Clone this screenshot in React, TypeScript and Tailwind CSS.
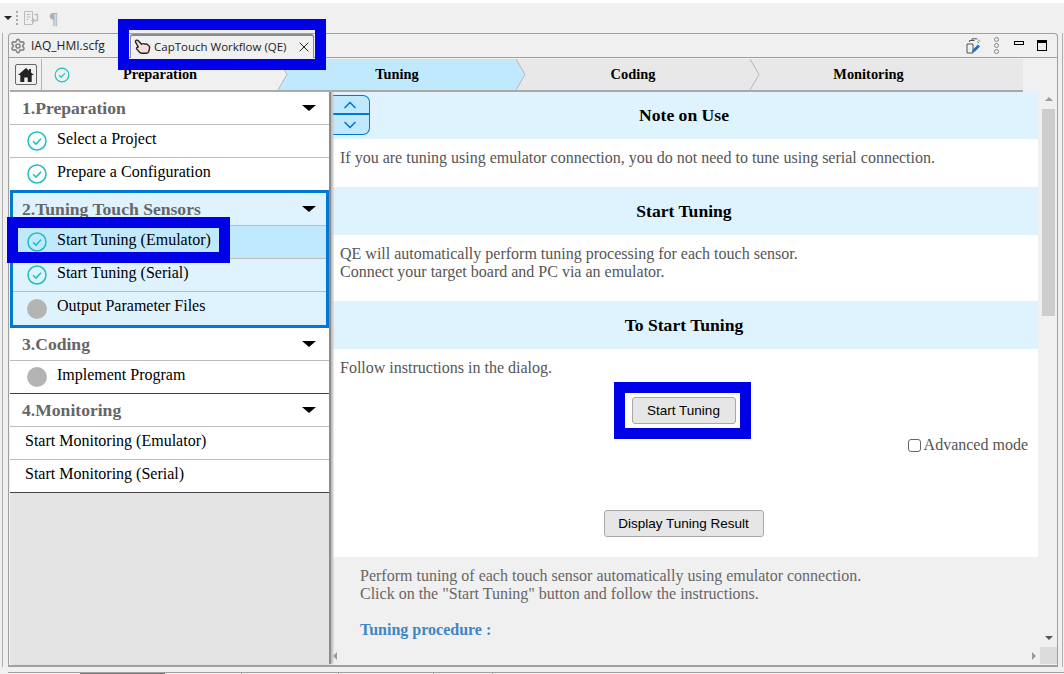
import { ChevronDown, ChevronUp, Settings, X } from "lucide-react";

const serif = "font-['Liberation_Serif',serif]";

const CheckIcon = () => (
  <svg width="20" height="20" viewBox="0 0 20 20" fill="none" className="shrink-0">
    <circle cx="10" cy="10" r="9" stroke="#1fbfc0" strokeWidth="1.5" />
    <path d="M6 10.300l3 2.800 5-5.400" stroke="#1fbfc0" strokeWidth="1.5" />
  </svg>
);

const GrayDot = () => <div className="w-5 h-5 rounded-full bg-[#b4b4b4] shrink-0" />;

const Caret = () => (
  <div className="w-0 h-0 border-x-[7px] border-x-transparent border-t-[6px] border-t-black" />
);

const HandIcon = () => (
  <svg width="17" height="16" viewBox="0 0 18 17" fill="none" className="shrink-0">
    <path
      d="M1.500 2.500C2 1 3.500 .8 4.500 1.800L8 5.500c1.500-.8 3-.6 4 0 1.200-.3 2.500.2 3.200 1.200 1 .4 1.600 1.500 1.300 3l-.8 3.500c-.3 1.300-1.200 2-2.500 2H8.500c-1.500 0-2.500-.6-3.200-1.800L2.800 10.500C2.300 9.500 3 8.500 4.500 8.500L2 4c-.4-.5-.6-1-.5-1.500z"
      fill="#f8dcd8"
      stroke="#222"
      strokeWidth="1.500"
      strokeLinejoin="round"
    />
  </svg>
);

const HomeIcon = () => (
  <svg width="16" height="14" viewBox="0 0 16 14" fill="#222">
    <path d="M8 0L0 7h2.300v7h4V9.500h3.400V14h4V7H16L13 4.400V1h-2v1.700z" />
  </svg>
);

const PreferIcon = () => (
  <svg width="15" height="16" viewBox="0 0 15 16" fill="none">
    <path d="M1 6h6v9H1zM3.500 4V2.500h5M6 2V.8h5" stroke="#555" strokeWidth="1" />
    <path d="M11 3.500l2 1.500M12 1.500l2 2" stroke="#777" strokeWidth="1" />
    <path d="M6 14.500l1-3 5-5 2 2-5 5z" fill="#1a6fc0" />
  </svg>
);

const ToolbarIcon = () => (
  <svg width="15" height="15" viewBox="0 0 15 15" fill="none" stroke="#bcbcbc" className="ml-[2px]">
    <path d="M.5 .5h8v13h-8zM2.500 3.500h4M2.500 6h4M2.500 8.500h2" />
    <path d="M10.500 3.500h3v6h-5M10 7.500l-2 2 2 2" strokeWidth="1.300" />
  </svg>
);

const SidebarHeader = ({ label }: { label: string }) => (
  <div className="h-[33px] flex items-center justify-between pl-3 pr-[13px] border-b border-[#bdbdbd]">
    <span className="text-[17.6px] font-bold text-[#666] leading-none pt-[2px]">{label}</span>
    <Caret />
  </div>
);

type RowProps = { label: string; state?: "done" | "todo"; active?: boolean; indent?: string; line?: string };

const SidebarRow = ({ label, state, active, indent = "pl-[17px]", line = "h-[33px] border-b border-[#bdbdbd]" }: RowProps) => (
  <div className={`flex items-center gap-[10px] ${indent} ${line} ${active ? "bg-[#c1e9fd]" : ""}`}>
    {state === "done" && <CheckIcon />}
    {state === "todo" && <GrayDot />}
    <span className="text-[16px] text-black leading-none pb-[5px]">{label}</span>
  </div>
);

const Sidebar = () => (
  <div className="w-[321px] shrink-0 flex flex-col bg-[#e4e4e4] border-r-[2px] border-[#8c8c8c] shadow-[2px_0_2px_#bbb] z-10">
    <div className="bg-white border-b border-[#444]">
      <SidebarHeader label="1.Preparation" />
      <SidebarRow label="Select a Project" state="done" />
      <SidebarRow label="Prepare a Configuration" state="done" line="h-[32px]" />
      <div className="border-[3px] border-[#0078d4] bg-[#dff3ff]">
        <div className="h-[33px] flex items-center justify-between pl-[9px] pr-[10px] border-b border-[#bdbdbd]">
          <span className="text-[17.6px] font-bold text-[#666] leading-none pt-[2px]">2.Tuning Touch Sensors</span>
          <Caret />
        </div>
        <SidebarRow label="Start Tuning (Emulator)" state="done" active indent="pl-[14px]" />
        <SidebarRow label="Start Tuning (Serial)" state="done" indent="pl-[14px]" />
        <SidebarRow label="Output Parameter Files" state="todo" indent="pl-[14px]" line="h-[33px]" />
      </div>
      <SidebarHeader label="3.Coding" />
      <SidebarRow label="Implement Program" state="todo" line="h-[33px] border-b border-[#444]" />
      <SidebarHeader label="4.Monitoring" />
      <SidebarRow label="Start Monitoring (Emulator)" indent="pl-[15px]" />
      <SidebarRow label="Start Monitoring (Serial)" indent="pl-[15px]" line="h-[32px]" />
    </div>
  </div>
);

const Section = ({ title, h = "h-12" }: { title: string; h?: string }) => (
  <div className={`${h} flex items-center justify-center bg-[#dff3ff] text-[17.6px] font-bold text-black pr-[3px]`}>
    {title}
  </div>
);

const Btn = ({ label, w }: { label: string; w: string }) => (
  <button
    className={`${w} h-[27px] rounded-[3px] border border-[#a8a8a8] bg-[#e6e6e6] text-[13.5px] text-black font-['Liberation_Sans',sans-serif]`}
  >
    {label}
  </button>
);

const Content = () => (
  <div className="flex-1 min-w-0 ml-[2px] flex flex-col overflow-hidden">
    <div className="bg-white text-[16px] leading-[18px] text-[#555] relative">
      <div className="absolute -left-[2px] top-[3px] w-[39px] h-10 flex flex-col rounded-r-[7px] border border-l-0 border-[#0078d4] bg-[#c1e9fd] text-[#0078d4]">
        <div className="h-[19px] flex items-center justify-center border-b-[2px] border-[#0078d4]">
          <ChevronUp size={20} strokeWidth={2} />
        </div>
        <div className="flex-1 flex items-center justify-center">
          <ChevronDown size={20} strokeWidth={2} />
        </div>
      </div>
      <Section title="Note on Use" h="h-[47px] pb-[2px]" />
      <p className="pl-[7px] pt-[10px] pb-[20px]">
        If you are tuning using emulator connection, you do not need to tune using serial connection.
      </p>
      <Section title="Start Tuning" />
      <p className="pl-[7px] pt-[10px] pb-[20px]">
        QE will automatically perform tuning processing for each touch sensor.
        <br />
        Connect your target board and PC via an emulator.
      </p>
      <Section title="To Start Tuning" />
      <p className="pl-[7px] pt-[10px]">Follow instructions in the dialog.</p>
      <div className="flex justify-center pt-[20px] pr-[4px]">
        <Btn label="Start Tuning" w="w-[104px]" />
      </div>
      <label className="flex items-center justify-end pr-[10px] pt-[12px]">
        <span className="w-[13px] h-[13px] rounded-[3px] border border-[#666] bg-white mr-[3px]" />
        Advanced mode
      </label>
      <div className="flex justify-center pt-[56px] pb-[20px] pr-[4px]">
        <Btn label="Display Tuning Result" w="w-[160px]" />
      </div>
    </div>
    <div className="pl-[27px] pt-[10px] text-[16px] leading-[18px] text-[#666]">
      <p>
        Perform tuning of each touch sensor automatically using emulator connection.
        <br />
        Click on the "Start Tuning" button and follow the instructions.
      </p>
      <p className="pt-[18px] font-bold text-[#3f86c6]">Tuning procedure :</p>
    </div>
  </div>
);

const ScrollBars = () => (
  <div className="w-[17px] shrink-0 flex flex-col items-center pt-[5px]">
    <div className="w-0 h-0 border-x-[4px] border-x-transparent border-b-[4px] border-b-[#9a9a9a]" />
    <div className="w-[13px] h-[207px] mt-[8px] bg-[#cdcdcd]" />
    <div className="mt-auto mb-[7px] w-0 h-0 border-x-[4px] border-x-transparent border-t-[4px] border-t-[#555]" />
  </div>
);

const Chevron = ({ fill }: { fill: string }) => (
  <svg width="10" height="31" viewBox="0 0 10 31" fill={fill} className="absolute left-full top-0 z-10">
    <path d="M0 0l9 15.500-9 15.500" stroke="#b5b5b5" strokeWidth="1" />
  </svg>
);

const Breadcrumb = () => (
  <div className="h-[33px] w-[1013px] flex bg-[#e8e8e8] border-b-[2px] border-[#a8a8a8] text-[14.4px] font-bold text-black">
    <div className="w-[268px] relative flex items-center bg-[#f0f0f0]">
      <div className="w-[32px] h-[31px] flex items-center justify-center border-r border-[#b5b5b5]">
        <div className="w-[22px] h-[21px] flex items-center justify-center border border-[#666] rounded-[2px]">
          <HomeIcon />
        </div>
      </div>
      <div className="ml-[12px]">
        <svg width="16" height="16" viewBox="0 0 16 16" fill="none">
          <circle cx="8" cy="8" r="6.800" stroke="#1fbfc0" strokeWidth="1.200" />
          <path d="M5 8.200l2.200 2 3.800-4" stroke="#1fbfc0" strokeWidth="1.200" />
        </svg>
      </div>
      <span className="ml-[53px]">Preparation</span>
      <Chevron fill="#f0f0f0" />
    </div>
    <div className="w-[238px] relative flex items-center justify-center bg-[#c1e9fd]">
      Tuning
      <Chevron fill="#c1e9fd" />
    </div>
    <div className="w-[234px] relative flex items-center justify-center">
      Coding
      <Chevron fill="#e8e8e8" />
    </div>
    <div className="flex-1 flex items-center justify-center pr-[36px]">Monitoring</div>
  </div>
);

const TabBar = () => (
  <div className="h-[24px] flex items-center border-b border-[#a0a0a0] font-['Open_Sans',sans-serif] text-[#222]">
    <div className="w-[121px] flex items-center gap-[5px] pl-[1px] text-[12px]">
      <Settings size={16} strokeWidth={2.500} className="text-[#888]" />
      <span>IAQ_HMI.scfg</span>
    </div>
    <div className="w-[184px] h-[24px] mt-px flex items-center gap-[3px] pl-[3px] border-x border-t-[2px] border-[#8a8a8a] rounded-t-[3px] bg-[#f0f0f0] text-[11.5px]">
      <HandIcon />
      <span className="whitespace-nowrap">CapTouch Workflow (QE)</span>
      <X size={16} strokeWidth={1.500} className="ml-[6px] shrink-0" />
    </div>
    <div className="ml-auto flex items-center pr-[10px]">
      <PreferIcon />
      <div className="ml-[13px] flex flex-col gap-px">
        <span className="w-[5px] h-[5px] rounded-full border border-[#888]" />
        <span className="w-[5px] h-[5px] rounded-full border border-[#888]" />
        <span className="w-[5px] h-[5px] rounded-full border border-[#888]" />
      </div>
      <div className="ml-[15px] mb-[6px] w-[10px] h-[4px] border border-black" />
      <div className="ml-[13px] w-[10px] h-[11px] border border-black border-t-[3px]" />
    </div>
  </div>
);

const Highlight = ({ cls }: { cls: string }) => (
  <div className={`absolute border-[11px] border-[#0000e6] pointer-events-none z-20 ${cls}`} />
);

export default function App() {
  return (
    <div className={`relative w-[1064px] h-[674px] overflow-hidden flex flex-col bg-[#f0f0f0] ${serif}`}>
      <div className="h-[3px] shrink-0 bg-white" />
      <div className="h-[30px] shrink-0 flex items-center pl-[4px] gap-[4px]">
        <div className="w-0 h-0 border-x-[4px] border-x-transparent border-t-[4px] border-t-[#222]" />
        <div className="h-[14px] border-l-2 border-dotted border-[#aaa]" />
        <ToolbarIcon />
        <span className="text-[17px] text-[#b0b0b0] font-bold ml-[6px] leading-none">¶</span>
      </div>
      <div className="h-[634px] shrink-0 flex">
        <div className="w-[3px] border-r border-[#b0b0b0]" />
        <div className="w-[5px]" />
        <div className="w-[1050px] border border-b-2 border-[#a0a0a0] rounded-t-[4px] flex flex-col">
          <TabBar />
          <div className="pl-px pt-px flex flex-col flex-1 min-h-0">
            <Breadcrumb />
            <div className="flex flex-1 min-h-0 mb-[1px]">
              <Sidebar />
              <div className="flex-1 min-w-0 flex flex-col">
                <div className="flex flex-1 min-h-0">
                  <Content />
                  <div className="w-[2px]" />
                  <ScrollBars />
                </div>
                <div className="h-[17px] flex items-center shrink-0">
                  <div className="ml-[2px] w-0 h-0 border-y-[4px] border-y-transparent border-r-[4px] border-r-[#9a9a9a]" />
                  <div className="ml-auto mr-[4px] w-0 h-0 border-y-[4px] border-y-transparent border-l-[4px] border-l-[#9a9a9a]" />
                  <div className="w-[17px] h-[17px] bg-[#dcdcdc]" />
                </div>
              </div>
            </div>
          </div>
        </div>
        <div className="w-[4px]" />
        <div className="flex-1 border-l border-[#b0b0b0]" />
      </div>
      <div className="flex-1 min-h-0 mt-[5px] flex border-t border-[#a0a0a0] ml-[8px]">
        <div className="ml-[72px] w-[85px] h-[3px] bg-[#777]" />
        <div className="ml-[76px] h-full border-l border-[#aaa]" />
        <div className="ml-[96px] h-full border-l border-[#aaa]" />
        <div className="ml-[94px] h-full border-l border-[#aaa]" />
        <div className="ml-[58px] h-full border-l border-[#aaa]" />
      </div>
      <Highlight cls="left-[118px] top-[19px] w-[208px] h-[51px]" />
      <Highlight cls="left-[7px] top-[217px] w-[223px] h-[46px]" />
      <Highlight cls="left-[614px] top-[382px] w-[137px] h-[57px]" />
    </div>
  );
}
